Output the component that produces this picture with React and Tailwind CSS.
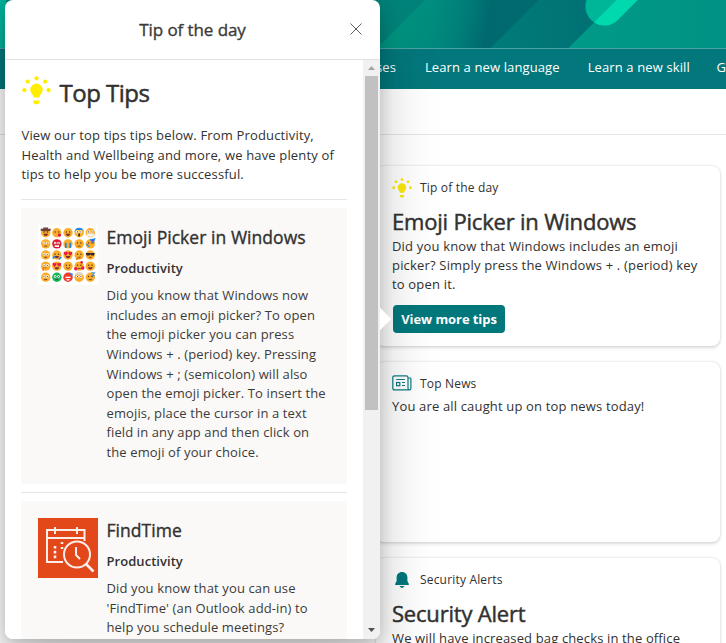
import React from "react";

function Lines({ items, className }) {
  return (
    <p className={className}>
      {items.map((line, i) => (
        <span key={i} className="block whitespace-nowrap">{line}</span>
      ))}
    </p>
  );
}

function Bulb({ className, color = "#ffee00" }) {
  return (
    <svg viewBox="0 0 29 29" className={className} fill={color}>
      <path d="M14.5 7.6a6.1 6.1 0 0 1 6.2 6.2c0 3.6-3.1 4.7-3.1 7.6h-6.2c0-2.9-3.1-4-3.1-7.6a6.1 6.1 0 0 1 6.2-6.2z" />
      <path d="M11.4 24.6h6.2v1.2c0 1.5-1 2.4-2.2 2.4h-1.8c-1.3 0-2.2-.9-2.2-2.4z" />
      <circle cx="14.5" cy="2.3" r="2.1" />
      <circle cx="5.8" cy="5.6" r="2.1" />
      <circle cx="23.2" cy="5.6" r="2.1" />
      <circle cx="2.4" cy="14.2" r="2.1" />
      <circle cx="26.6" cy="14.2" r="2.1" />
    </svg>
  );
}

function NewsIcon() {
  return (
    <svg viewBox="0 0 20 16" className="mb-0.5 h-4 w-5" fill="none" stroke="#0c7c82" strokeWidth="1.2">
      <path d="M2.6 .8H14.2Q16 .8 16 2.6V13.2Q16 14.9 17.4 14.9Q18.9 14.9 18.9 13.2V4.2Q18.9 3 17.6 3H16M17.4 14.9H2.6Q.8 14.9 .8 13.2V2.6Q.8 .8 2.6 .8" />
      <path d="M4.2 4.5H12.8M10 7.5H13M10 10.5H13" />
      <rect x="4.6" y="7.5" width="3.2" height="3.2" />
    </svg>
  );
}

function BellIcon() {
  return (
    <svg viewBox="0 0 14 16" className="h-4 w-3.5" fill="#02777d">
      <path d="M7 0c3.1 0 5.4 2.3 5.4 5.4v3.5l1.5 3.1c.2.5-.1 1-.6 1H.7c-.5 0-.8-.5-.6-1l1.5-3.1V5.4C1.6 2.300 3.900 0 7 0z" />
      <path d="M4.600 14h4.800c-.4 1.200-1.300 1.800-2.400 1.800s-2-.6-2.400-1.800z" />
    </svg>
  );
}

const FACES = [
  ["hat", "kiss", "grin", "scream", "mask"],
  ["plain", "rage", "sob", "worry", "party"],
  ["plain", "rofl", "heartEyes", "think", "cool"],
  ["hush", "heartEyes", "smile", "hearts", "angry"],
  ["flush", "sick", "hot", "mind", "sleep"],
];

const SKIN = { rage: "#e0182d", sick: "#12b85c", hot: "#ef3b2c", scream: "#f7b62c" };

function Face({ kind, x, y }) {
  const red = "#e8174b";
  const blue = "#2386e8";
  return (
    <g transform={`translate(${x} ${y})`}>
      <circle r="4.7" fill={SKIN[kind] || "#fbae2b"} />
      {["plain", "flush", "sick", "rage", "mind", "scream", "mask", "hush"].includes(kind) && (
        <g>
          <circle cx="-1.7" cy="-.8" r="1.3" fill="#fff" />
          <circle cx="1.7" cy="-.8" r="1.3" fill="#fff" />
          <circle cx="-1.700" cy="-.8" r=".55" fill="#402a32" />
          <circle cx="1.7" cy="-.8" r=".55" fill="#402a32" />
        </g>
      )}
      {["hat", "kiss", "grin", "worry", "party", "rofl", "think", "smile", "hearts", "angry", "sleep"].includes(kind) && (
        <g fill="#5c3a20">
          <circle cx="-1.7" cy="-.8" r=".75" />
          <circle cx="1.7" cy="-.8" r=".75" />
        </g>
      )}
      {["hat", "grin", "rofl", "heartEyes", "angry"].includes(kind) && (
        <path d="M-2.300 1H2.300Q1.800 3.300 0 3.300T-2.300 1z" fill="#7b2b36" />
      )}
      {kind === "smile" && <path d="M-2 1.300Q0 3.600 2 1.300" stroke="#6b3a24" strokeWidth=".9" fill="none" />}
      {["plain", "worry", "think", "flush", "sick", "hearts", "sleep", "cool"].includes(kind) && (
        <path d="M-1.500 2.300H1.500" stroke="#6b3a24" strokeWidth=".9" />
      )}
      {kind === "hat" && <path d="M-5-3.200Q0-1.600 5-3.200M-2.500-4.200H2.500" stroke="#704235" strokeWidth="1.900" fill="none" />}
      {kind === "kiss" && <circle cx="2.600" cy="2.400" r="1.700" fill={red} />}
      {kind === "scream" && <path d="M-4.600-.5Q-4.500-5 0-5T4.600-.5L3.300-2.600H-3.300z" fill={blue} />}
      {kind === "scream" && <ellipse cy="2.300" rx="1" ry="1.700" fill="#4d2638" />}
      {kind === "mask" && <path d="M-3.500 .8H3.500V3L0 4.300L-3.500 3z" fill="#f4f1f5" />}
      {kind === "rage" && <path d="M-2.200 2.300H2.200" stroke="#fff" strokeWidth="1.600" />}
      {kind === "sob" && <path d="M-2.200-1V4.200M2.200-1V4.200" stroke={blue} strokeWidth="1.800" />}
      {kind === "party" && <path d="M0-4L4.500-5L3-1zM-4 0L-1 3" fill="#8a3bd2" stroke={blue} strokeWidth="1.100" />}
      {kind === "rofl" && <path d="M-4 3.500L-2 1M2 4.500L4.500 2" stroke={blue} strokeWidth="1.700" />}
      {kind === "heartEyes" && (
        <g fill={red}>
          <path d="M-4.500-2.500Q-3-4-2.200-2.600Q-1-4-.2-2.300Q-.6-.4-2.300 .7Q-4-.5-4.500-2.500z" />
          <path d="M4.500-2.500Q3-4 2.200-2.600Q1-4 .2-2.300Q.6-.4 2.300 .7Q4-.5 4.500-2.500z" />
        </g>
      )}
      {kind === "cool" && <path d="M-4.500-2H4.500L3.600 .6H1L0-.8L-1 .6H-3.600z" fill="#2c2540" />}
      {kind === "think" && <path d="M-3 4.500L0 2.700" stroke="#d98022" strokeWidth="1.500" />}
      {kind === "hush" && <path d="M-2.500 4.700V1.500H1" stroke="#d98022" strokeWidth="1.300" fill="none" />}
      {kind === "hearts" && (
        <g fill={red}>
          <circle cx="-3.400" cy="2.600" r="1.700" />
          <circle cx="3.600" cy="1.800" r="1.700" />
          <circle cx="2.500" cy="-3.800" r="1.300" />
        </g>
      )}
      {kind === "hot" && <path d="M1-4.500L4.500-3.500L4.300-1.500zM3 3L4.500 1" fill={blue} stroke={blue} strokeWidth=".5" />}
      {kind === "hot" && <path d="M-2.500 0H2.500M-1.500 2.500H1.500" stroke="#fff" strokeWidth="1.200" />}
      {kind === "mind" && <path d="M-4-2.500Q-3-6 0-4.500Q3-6 4-2.500z" fill="#d8d5dc" />}
      {kind === "sleep" && <path d="M1-4.500H4.500L1.500-1.500H4.500" stroke={blue} strokeWidth="1" fill="none" />}
    </g>
  );
}

function EmojiGrid() {
  return (
    <svg viewBox="0 0 60 60" className="size-[60px] shrink-0 bg-white">
      {FACES.map((row, r) => row.map((kind, c) => <Face key={`${r}${c}`} kind={kind} x={7.700 + c * 11.150} y={7.700 + r * 11.150} />))}
    </svg>
  );
}

function FindTimeLogo() {
  return (
    <svg viewBox="0 0 60 60" className="size-[60px] shrink-0 bg-[#e2481a]" fill="none" stroke="#fbeee9" strokeWidth="2">
      <path d="M25 44H9V12H46.500V23M9 20H46.500M17 9V16M39 9V16" />
      <path d="M17 28V41M24 24V26M24 29V31" strokeDasharray="2.600 2.200" strokeWidth="2.600" />
      <circle cx="39" cy="36.500" r="13" />
      <path d="M38 29V37L42 41" />
      <path d="M48 46L55.500 53.500" strokeWidth="2.600" />
    </svg>
  );
}

function Banner() {
  return (
    <svg viewBox="0 0 726 48" className="block h-12 w-full" preserveAspectRatio="none">
      <defs>
        <linearGradient id="stripe" gradientUnits="userSpaceOnUse" x1="400" y1="20" x2="500" y2="40">
          <stop offset="0" stopColor="#009480" />
          <stop offset=".3" stopColor="#008c7e" />
          <stop offset=".6" stopColor="#007e79" />
          <stop offset=".85" stopColor="#006970" />
          <stop offset="1" stopColor="#006a70" />
        </linearGradient>
        <linearGradient id="mid" gradientUnits="userSpaceOnUse" x1="500" y1="30" x2="600" y2="20">
          <stop offset="0" stopColor="#007b79" />
          <stop offset="1" stopColor="#007074" />
        </linearGradient>
        <linearGradient id="right" gradientUnits="userSpaceOnUse" x1="570" y1="0" x2="726" y2="0">
          <stop offset="0" stopColor="#009a88" />
          <stop offset="1" stopColor="#009284" />
        </linearGradient>
      </defs>
      <rect width="726" height="48" fill="#00837a" />
      <rect width="6" height="48" fill="#00b098" />
      <path d="M425 0H540L492 48H377z" fill="url(#stripe)" />
      <path d="M538.500 0H617L569 48H490.500z" fill="url(#mid)" />
      <path d="M616.500 0H726V48H568.500z" fill="url(#right)" />
      <path d="M586.500 0A19 19 0 0 0 617.400 20.200L637.600 0z" fill="#00b698" />
      <path d="M616.500 0L594 22.500A19 19 0 0 0 617.400 20.200L637.600 0z" fill="#00d9ad" />
    </svg>
  );
}

function Card({ icon, label, className, children }) {
  return (
    <section className={`h-[180px] w-[344px] rounded-lg bg-white pt-3 pl-4 shadow-[0_1.600px_3.600px_rgba(0,0,0,0.13),0_0_2.900px_rgba(0,0,0,0.11)] ${className}`}>
      <div className="flex h-5 items-center gap-2">
        <span className="flex w-5 justify-center">{icon}</span>
        <span className="text-[12px] tracking-[0.180px]">{label}</span>
      </div>
      {children}
    </section>
  );
}

function CardTitle({ children }) {
  return <h2 className="mt-2 text-[22px] leading-[31px] tracking-[-0.200px] [-webkit-text-stroke:0.450px]">{children}</h2>;
}

function Tip({ image, title, lines, className }) {
  return (
    <div className={`flex gap-[8.500px] bg-[#faf9f8] pt-[17px] pl-[17px] ${className}`}>
      {image}
      <div>
        <h3 className="text-[17.500px] leading-[25px] tracking-[0.050px] [-webkit-text-stroke:0.350px]">{title}</h3>
        <h4 className="mt-[9px] text-[13px] leading-[19px] font-semibold tracking-[0.050px]">Productivity</h4>
        <Lines className="mt-[8.500px] text-[13px] leading-[19.600px] tracking-[0.120px] text-[#3d3b39]" items={lines} />
      </div>
    </div>
  );
}

function Popover() {
  return (
    <div className="absolute top-0 left-[5px] h-[639px] w-[375px] rounded-lg shadow-[0_25.600px_57.600px_rgba(0,0,0,0.22),0_4.800px_14.400px_rgba(0,0,0,0.18)]">
      <div className="absolute top-[311px] -right-2 size-4 rotate-45 bg-white" />
      <div className="relative flex h-full flex-col overflow-hidden rounded-lg bg-white">
        <header className="relative flex h-[60px] shrink-0 items-center justify-center border-b border-[#e1e1e1]">
          <h1 className="text-[17px] tracking-[-0.080px] text-[#3b3a39] [-webkit-text-stroke:0.350px]">Tip of the day</h1>
          <svg viewBox="0 0 12 12" className="absolute top-[23px] right-[18px] size-3" stroke="#605e5c" strokeWidth="1">
            <path d="M.5.5L11.500 11.500M11.500.5L.5 11.500" />
          </svg>
        </header>
        <div className="flex min-h-0 flex-1">
          <div className="w-[358px] overflow-hidden pl-4">
            <div className="flex h-[58px] items-start gap-[9px] pt-4">
              <Bulb className="ml-[0.500px] size-[29px]" />
              <h2 className="text-[24px] leading-[33px] tracking-[-0.500px] [-webkit-text-stroke:0.500px]">Top Tips</h2>
            </div>
            <Lines
              className="mt-2 pl-[0.500px] text-[13px] leading-[19.600px] tracking-[0.160px]"
              items={["View our top tips tips below. From Productivity,", "Health and Wellbeing and more, we have plenty of", "tips to help you be more successful."]}
            />
            <hr className="mt-[14px] mr-4 border-[#e6e6e6]" />
            <Tip
              className="mt-2 mr-4 h-[276px]"
              image={<EmojiGrid />}
              title="Emoji Picker in Windows"
              lines={[
                "Did you know that Windows now",
                "includes an emoji picker? To open",
                "the emoji picker you can press",
                "Windows + . (period) key. Pressing",
                "Windows + ; (semicolon) will also",
                "open the emoji picker. To insert the",
                "emojis, place the cursor in a text",
                "field in any app and then click on",
                "the emoji of your choice.",
              ]}
            />
            <hr className="mt-2 mr-4 border-[#e6e6e6]" />
            <Tip
              className="mt-2 mr-4 h-[276px]"
              image={<FindTimeLogo />}
              title="FindTime"
              lines={["Did you know that you can use", "'FindTime' (an Outlook add-in) to", "help you schedule meetings?"]}
            />
          </div>
          <div className="flex w-[17px] flex-col items-center bg-[#f1f1f1]">
            <div className="flex h-4 items-center justify-center">
              <svg viewBox="0 0 7 4" className="h-1 w-[7px]" fill="#a3a3a3"><path d="M3.500 0L7 4H0z" /></svg>
            </div>
            <div className="h-[334px] w-[13px] bg-[#c1c1c1]" />
            <div className="mt-auto flex h-[18px] items-center">
              <svg viewBox="0 0 7 4" className="h-1 w-[7px]" fill="#505050"><path d="M3.500 4L7 0H0z" /></svg>
            </div>
          </div>
        </div>
      </div>
    </div>
  );
}

export default function App() {
  return (
    <div className="relative h-[643px] w-[726px] overflow-hidden bg-white font-['Open_Sans','Noto_Sans',sans-serif] text-[#323130]">
      <Banner />
      <nav className="flex h-[41px] items-center border-t border-[#4ba3a6] bg-[#03787c] pb-[3px] pl-[376px] text-[13px] tracking-[0.120px] whitespace-nowrap text-white">
        <span className="w-[49px]">ses</span>
        <span className="w-[163px]">Learn a new language</span>
        <span className="w-[129px]">Learn a new skill</span>
        <span>G</span>
      </nav>
      <div className="h-[46px] border-b border-[#e6e6e6]" />
      <main className="flex flex-col gap-4 pt-[31px] pl-[376px]">
        <Card icon={<Bulb className="size-5" color="#fbe80a" />} label="Tip of the day">
          <CardTitle>Emoji Picker in Windows</CardTitle>
          <Lines
            className="text-[13px] leading-[19px] tracking-[0.180px]"
            items={["Did you know that Windows includes an emoji", "picker? Simply press the Windows + . (period) key", "to open it."]}
          />
          <button className="mt-[11px] ml-px h-7 w-28 rounded-sm bg-[#03787c] pt-px text-[13px] font-bold tracking-[-0.080px] whitespace-nowrap text-white">View more tips</button>
        </Card>
        <Card icon={<NewsIcon />} label="Top News">
          <Lines className="mt-[3px] text-[13px] leading-[19px] tracking-[0.160px]" items={["You are all caught up on top news today!"]} />
        </Card>
        <Card icon={<BellIcon />} label="Security Alerts">
          <CardTitle>Security Alert</CardTitle>
          <Lines className="text-[13px] leading-[19px] tracking-[0.140px]" items={["We will have increased bag checks in the office"]} />
        </Card>
      </main>
      <Popover />
    </div>
  );
}
